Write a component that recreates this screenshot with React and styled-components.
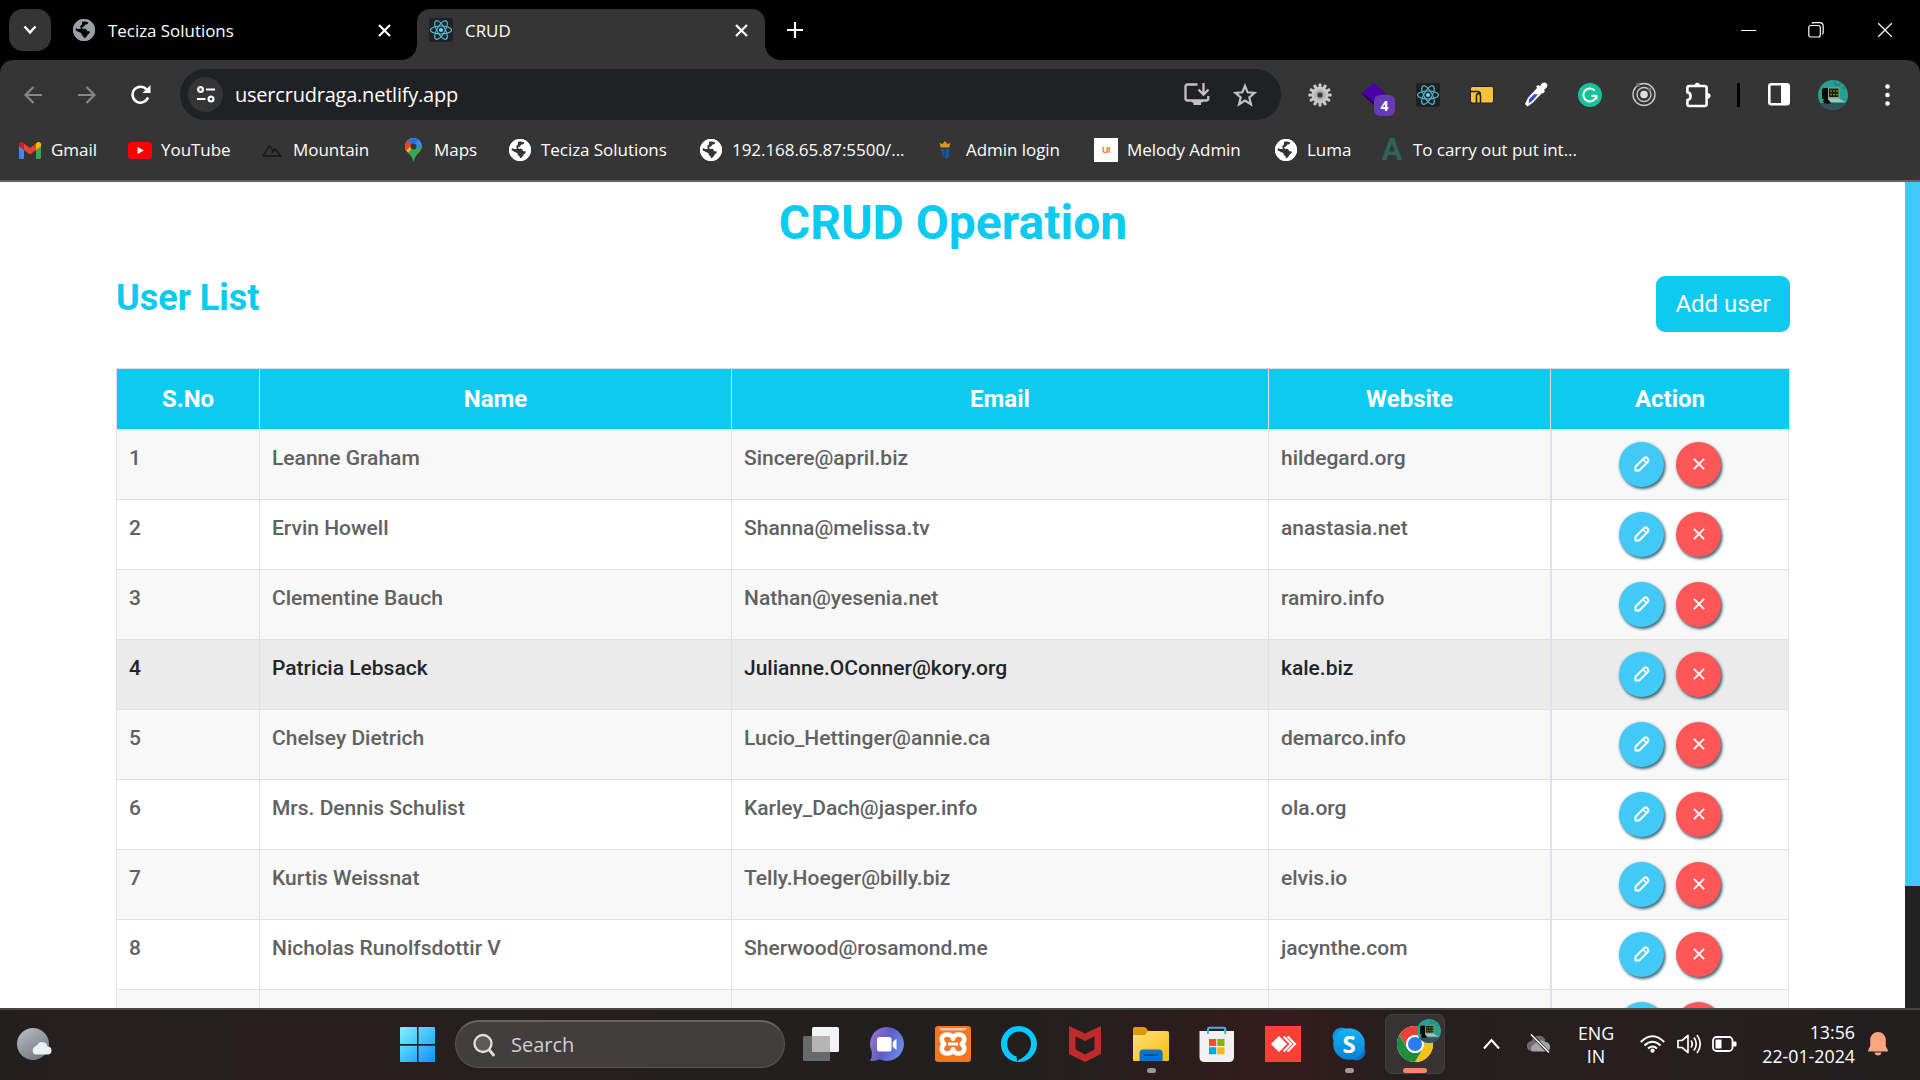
import React from "react";
import styled, { createGlobalStyle } from "styled-components";

const GlobalStyle = createGlobalStyle`
  *, *::before, *::after { box-sizing: border-box; }
  html, body { margin: 0; padding: 0; background: #000; overflow: hidden; }
  button { font: inherit; border: 0; padding: 0; background: none; color: inherit; }
  svg { display: block; flex: none; }
`;

const UI = `"Segoe UI", "Open Sans", "Noto Sans", sans-serif`;

const Screen = styled.div`
  width: 1920px;
  height: 1080px;
  display: flex;
  flex-direction: column;
  overflow: hidden;
  font-family: ${UI};
`;

/* ---------- browser chrome ---------- */
const TabStrip = styled.div`
  height: 60px;
  flex: none;
  display: flex;
  background: #000;
  padding: 9px 0 0 9px;
  color: #fff;
`;
const TabSearch = styled.button`
  width: 42px;
  height: 42px;
  border-radius: 14px;
  background: #353535;
  display: flex;
  align-items: center;
  justify-content: center;
  margin-right: 10px;
`;
const Tab = styled.div`
  position: relative;
  height: 51px;
  width: ${(p) => p.$width}px;
  padding: 0 ${(p) => (p.$active ? 17 : 26)}px 9px 12px;
  display: flex;
  align-items: center;
  font-size: 16.9px;
  letter-spacing: 0;
  white-space: nowrap;
  border-radius: 13px 13px 0 0;
  background: ${(p) => (p.$active ? "#353535" : "transparent")};
  &::before, &::after {
    content: "";
    display: ${(p) => (p.$active ? "block" : "none")};
    position: absolute;
    bottom: 0;
    width: 15px;
    height: 15px;
  }
  &::before { left: -15px; background: radial-gradient(circle at 0 0, transparent 14.5px, #353535 15px); }
  &::after { right: -15px; background: radial-gradient(circle at 100% 0, transparent 14.5px, #353535 15px); }
`;
const TabTitle = styled.span`
  flex: 1;
  margin-left: ${(p) => (p.$active ? 12 : 13)}px;
  padding-top: 1px;
`;
const NewTab = styled.button`
  width: 60px;
  height: 42px;
  display: grid;
  place-items: center;
`;
const WindowControls = styled.div`
  margin-left: auto;
  height: 42px;
  display: grid;
  grid-template-columns: 68px 68px 70px;
  place-items: center;
`;

const ChromePanel = styled.div`
  background: #000;
  flex: none;
`;
const ChromeInner = styled.div`
  height: 122px;
  background: #353535;
  border-radius: 13px 13px 0 0;
  border-bottom: 2px solid #656363;
`;
const Toolbar = styled.div`
  height: 69px;
  padding-top: 9px;
  display: flex;
  align-items: flex-start;
`;
const NavButtons = styled.div`
  width: 180px;
  height: 51px;
  padding-left: 6px;
  display: grid;
  grid-template-columns: repeat(3, 54px);
  place-items: center;
`;
const Omnibox = styled.div`
  width: 1101px;
  height: 51px;
  border-radius: 26px;
  background: #202124;
  display: flex;
  align-items: center;
  padding: 0 24px 0 8px;
  color: #fff;
`;
const SiteInfo = styled.span`
  width: 35px;
  height: 35px;
  border-radius: 50%;
  background: #353535;
  display: grid;
  place-items: center;
`;
const Url = styled.span`
  flex: 1;
  margin-left: 12px;
  font-size: 20px;
  letter-spacing: -0.22px;
`;
const OmniActions = styled.div`
  display: flex;
  gap: 23px;
  align-items: center;
`;
const Extensions = styled.div`
  height: 51px;
  margin-left: 12px;
  display: grid;
  grid-template-columns: repeat(8, 54px) 27px 54px 54px 54px;
  place-items: center;
`;
const Divider = styled.i`
  width: 3px;
  height: 24px;
  background: #000;
`;
const BadgeHost = styled.div`
  position: relative;
  width: 24px;
  height: 24px;
`;
const Badge = styled.span`
  position: absolute;
  left: 12px;
  top: 12px;
  width: 21px;
  height: 21px;
  border-radius: 6px;
  background: #673ab7;
  color: #fff;
  font-weight: 700;
  font-size: 14px;
  line-height: 22px;
  text-align: center;
`;
const Bookmarks = styled.div`
  height: 42px;
  padding-left: 18px;
  display: grid;
  grid-template-columns: 110px 132px 141px 107px 191px 234px 161px 180px 106px auto;
  align-items: center;
  justify-content: start;
  color: #fff;
  font-size: 17px;
`;
const Bookmark = styled.span`
  display: flex;
  align-items: center;
  gap: 9px;
  white-space: nowrap;
  letter-spacing: -0.05px;
`;
const BookmarkLabel = styled.span`
  padding-bottom: 2px;
`;
const Slot = styled.i`
  width: 24px;
  height: 24px;
  display: grid;
  place-items: center;
  font-style: normal;
`;
const UiTile = styled.i`
  width: 24px;
  height: 24px;
  background: #fff;
  color: #f4733c;
  font: 900 9px/24px "Liberation Sans", Arial, sans-serif;
  letter-spacing: -0.5px;
  text-align: center;
`;
const LetterA = styled.i`
  font: 700 31px/24px Roboto, sans-serif;
  color: #30635a;
`;

/* ---------- page ---------- */
const Viewport = styled.div`
  height: 826px;
  flex: none;
  display: flex;
  background: #fff;
  overflow: hidden;
  font-family: Roboto, sans-serif;
`;
const Page = styled.main`
  width: 1905px;
  height: 826px;
  overflow: hidden;
  padding: 11px 115px 0 116px;
`;
const Scrollbar = styled.div`
  width: 15px;
  background: #222;
`;
const Thumb = styled.div`
  height: 704px;
  background: #3fc8f8;
`;
const Heading = styled.h1`
  margin: 0 0 24px;
  font-size: 48px;
  line-height: 59px;
  font-weight: 700;
  color: #0dcaf0;
  text-align: center;
`;
const ListHeader = styled.div`
  display: flex;
  justify-content: space-between;
  align-items: flex-start;
  margin-bottom: 36px;
`;
const SubHeading = styled.h2`
  margin: 0;
  font-size: 36px;
  line-height: 45px;
  font-weight: 700;
  color: #0dcaf0;
`;
const AddButton = styled.button`
  width: 134px;
  height: 56px;
  border-radius: 9px;
  background: #0dcaf0;
  color: #fff;
  font-size: 24px;
`;
const HeadRow = styled.div`
  display: grid;
  grid-template-columns: 143px 472px 537px 282px 240px;
  height: 62px;
  background: #0dcaf0;
  border: solid #dee2e6;
  border-width: 1px 0;
`;
const HeadCell = styled.div`
  border-left: 1px solid #dee2e6;
  color: #fff;
  font-size: 24px;
  line-height: 60px;
  font-weight: 700;
  text-align: center;
  &:last-child { border-right: 1px solid #dee2e6; }
`;
const Row = styled.div`
  display: grid;
  grid-template-columns: 143px 472px 537px 282px 239px;
  width: 1673px;
  height: 70px;
  border-bottom: 1px solid #dee2e6;
  background: ${(p) => (p.$hover ? "#ebebeb" : p.$striped ? "#f8f8f8" : "#fff")};
  color: ${(p) => (p.$hover ? "#212529" : "#616161")};
`;
const Cell = styled.div`
  border-left: 1px solid #dee2e6;
  padding: 13px 11px 0 12px;
  font-size: 21px;
  line-height: 31px;
  font-weight: 500;
  white-space: nowrap;
`;
const ActionCell = styled.div`
  border-left: 2px solid #dee2e6;
  border-right: 1px solid #dee2e6;
  display: flex;
  justify-content: center;
  gap: 12px;
  padding: 12px 0 0 0;
`;
const Round = styled.button`
  width: 45px;
  height: 45px;
  border-radius: 50%;
  background: ${(p) => (p.$danger ? "#ff5757" : "#41c9f7")};
  box-shadow: 1.5px 2px 3px rgba(0, 60, 80, 0.75), 0 0 3px rgba(0, 0, 0, 0.18);
  display: grid;
  place-items: center;
  padding-bottom: 2px;
`;

/* ---------- taskbar ---------- */
const Taskbar = styled.footer`
  height: 72px;
  flex: none;
  display: flex;
  align-items: stretch;
  border-top: 2px solid #484545;
  color: #fff;
  background: linear-gradient(90deg, #241f1f 0, #291e1f 18%, #241f1f 35%, #241f1f 54%, #2d1d1d 62%, #351b1c 67%, #241f1f 73%, #281e1f 85%, #221f1f 100%);
`;
const Weather = styled.div`
  width: 384px;
  padding-left: 17px;
  display: flex;
  align-items: center;
`;
const Start = styled.div`
  width: 71px;
  display: flex;
  align-items: center;
  padding-left: 16px;
  padding-bottom: 1px;
`;
const SearchBox = styled.div`
  width: 330px;
  height: 48px;
  margin-top: 10px;
  border-radius: 24px;
  background: #433e3e;
  border: 1px solid #5b5656;
  border-top: 2px solid #696363;
  display: flex;
  align-items: center;
  gap: 15px;
  padding-left: 16px;
  color: #d2cfcf;
  font-size: 20px;
`;
const Apps = styled.div`
  display: grid;
  grid-template-columns: repeat(10, 66px);
  margin-left: 3px;
`;
const TaskbarApp = styled.div`
  position: relative;
  display: grid;
  place-items: center;
  padding-bottom: 2px;
`;
const ActiveTile = styled.div`
  width: 60px;
  height: 60px;
  border-radius: 7px;
  background: #393434;
  border: 1px solid #443f3f;
  display: grid;
  place-items: center;
`;
const Indicator = styled.i`
  position: absolute;
  left: calc(50% - ${(p) => p.$w / 2}px);
  bottom: 7px;
  width: ${(p) => p.$w}px;
  height: 5px;
  border-radius: 3px;
  background: ${(p) => p.$c};
`;
const Tray = styled.div`
  flex: 1;
  display: flex;
  align-items: center;
  padding-left: 19px;
`;
const TrayIcon = styled.div`
  width: ${(p) => p.$w}px;
  flex: none;
  display: grid;
  place-items: center;
  padding-bottom: 2px;
`;
const Lang = styled.div`
  width: 66px;
  flex: none;
  text-align: center;
  font-size: 17.8px;
  line-height: 23px;
  padding-bottom: 1px;
`;
const Clock = styled.div`
  width: 109px;
  flex: none;
  text-align: right;
  font-size: 17.8px;
  line-height: 24px;
  padding-bottom: 3px;
  letter-spacing: 0;
  white-space: nowrap;
`;

/* ---------- icons ---------- */
const Globe = ({ color, bg }) => (
  <svg width="22" height="22" viewBox="0 0 22 22">
    <circle cx="11" cy="11" r="11" fill={color} />
    <path d="M9 2.6 C12 1.8 14.5 2.3 15.6 3.2 C15.4 4.8 13.8 5.6 12 5.7 C11.6 7.2 10.8 7.9 9.3 8 C8.9 9 9.4 9.7 10.5 9.9 C12.4 9.7 13.7 10.3 13.9 11.8 C14.8 12.6 15.8 12.2 16.7 12.6 C16.9 14.4 15.7 15.2 14.6 15.6 C14.2 17.3 13 18.9 11 19.3 L10.4 17 C8.7 16.6 8.4 15.4 8.6 14.2 C6.5 13.8 5 12.2 2.6 11.6 C2.4 10.6 2.5 9.8 2.8 8.9 C4.2 10 6.3 10.4 8 9.7 C6.8 8.2 7.2 6.6 9 5.6 Z" fill={bg} />
    <circle cx="11" cy="11" r="9.8" fill="none" stroke={color} strokeWidth="2.2" />
  </svg>
);
const Close = ({ size = 13, w = 2.2 }) => (
  <svg width={size} height={size} viewBox="0 0 13 13" stroke="#fff" strokeWidth={w} fill="none">
    <path d="M1 1 12 12 M12 1 1 12" />
  </svg>
);
const ReactLogo = ({ tile }) => (
  <svg width="24" height="24" viewBox="0 0 24 24">
    <rect width="24" height="24" rx="2" fill={tile} />
    <g fill="none" stroke="#53c1de" strokeWidth="1.1">
      <ellipse cx="12" cy="12" rx="10.5" ry="4" />
      <ellipse cx="12" cy="12" rx="10.5" ry="4" transform="rotate(60 12 12)" />
      <ellipse cx="12" cy="12" rx="10.5" ry="4" transform="rotate(120 12 12)" />
    </g>
    <circle cx="12" cy="12" r="2.1" fill="#61dafb" />
  </svg>
);
const Gmail = () => (
  <svg width="22" height="17" viewBox="0 0 22 17">
    <path d="M0 2.5V15.5Q0 17 1.5 17H5V7L0 3Z" fill="#4285f4" />
    <path d="M22 2.5V15.5Q22 17 20.5 17H17V7L22 3Z" fill="#34a853" />
    <path d="M17 1.5V8L22 4.3V2.3C22 .2 19.7-.6 18.2.5Z" fill="#fbbc04" />
    <path d="M5 8V1.5L11 6 17 1.5V8L11 12.4Z" fill="#ea4335" />
    <path d="M0 2.3V4.3L5 8V1.5L3.8.5C2.2-.6 0 .3 0 2.3Z" fill="#c5221f" />
  </svg>
);
const YouTube = () => (
  <svg width="24" height="17" viewBox="0 0 24 17">
    <rect width="24" height="17" rx="4" fill="#f00" />
    <path d="M9.6 4.9v7.2L15.8 8.5Z" fill="#fff" />
  </svg>
);
const Mountain = () => (
  <svg width="20" height="13" viewBox="0 0 20 13" fill="none" stroke="#151515" strokeWidth="1.3" strokeLinejoin="round">
    <path d="M1 12 7.5 1.5 11 7 13 5 18.8 12Z M9.5 9.5 11.2 7" />
  </svg>
);
const MapsPin = () => (
  <svg width="17" height="24" viewBox="0 0 17 24">
    <defs>
      <clipPath id="pin"><path d="M8.5 0A8.4 8.4 0 0 1 17 8.4C17 14 10.3 15.5 8.5 24 6.7 15.5 0 14 0 8.4A8.4 8.4 0 0 1 8.5 0Z" /></clipPath>
    </defs>
    <g clipPath="url(#pin)">
      <rect width="17" height="24" fill="#34a853" />
      <path d="M0 16 17-2 0-2Z" fill="#fbbc04" />
      <path d="M0 18 12 5 4 5 0 10Z" fill="#fbbc04" />
      <path d="M0-1H17V3L8.5 8 2 3.5Z" fill="#1a73e8" />
      <path d="M8 8 14 1 17 5V8L8.5 12Z" fill="#4285f4" />
      <path d="M-1 2H2L7 6.5 0 14Z" fill="#ea4335" />
    </g>
    <circle cx="8.5" cy="8.4" r="3" fill="#353535" />
  </svg>
);
const Crown = () => (
  <svg width="12" height="18" viewBox="0 0 12 18">
    <path d="M.5 2 3.500 3 6 0 8.500 3 11.500 2 10.200 6.500H1.800Z" fill="#d9951f" />
    <path d="M2 8h3.500v8.500C4 16 3.300 14.500 3.300 13V10H2ZM6.600 8h3.600v5.500C10.200 16 9 17.500 6.200 18Z" fill="#0c5cab" />
  </svg>
);
const Gear = () => (
  <svg width="24" height="26" viewBox="-12 -13 24 26">
    <g fill="#c9c9c9">
      {Array.from({ length: 12 }, (_, i) => (
        <rect key={i} x="-1.5" y="-11.6" width="3" height="5" rx=".7" transform={`rotate(${i * 30})`} />
      ))}
      <circle r="8.2" fill="#c9c9c9" />
    </g>
    <circle r="3" fill="#353535" stroke="#8a8a8a" strokeWidth="1.3" />
    <circle r="5.2" fill="none" stroke="#a8a8a8" strokeWidth=".9" />
  </svg>
);
const Dropper = () => (
  <svg width="24" height="25" viewBox="0 0 24 25">
    <path d="M4.2 15.5 13.5 5.5 18.5 10.5 9 20.5 3.5 24.5 1 22Z" fill="#fff" />
    <path d="M5.2 17.2 10 12.2H14L8.2 19 4.6 21.5Z" fill="#2d4fc5" />
    <path d="M12 4.5 14.4 2.9 16 4.4C17 1.4 20 -.5 22.4 1.2 24.6 3 23 6.4 20 7.7L21 9.3 18.7 11.8Z" fill="#fff" />
  </svg>
);
const Grammarly = () => (
  <svg width="24" height="24" viewBox="0 0 24 24">
    <circle cx="12" cy="12" r="12" fill="#15c39a" />
    <path d="M16.8 7.7A6.5 6.5 0 1 0 18.3 12.8H13.4M18.4 12.8V16.6" fill="none" stroke="#fff" strokeWidth="2" />
  </svg>
);
const Target = () => (
  <svg width="24" height="25" viewBox="0 0 24 25" fill="none" stroke="#c9c9c9" strokeWidth="1.4">
    <circle cx="12" cy="12.5" r="11" />
    <circle cx="12" cy="12.5" r="7" />
    <circle cx="12" cy="12.5" r="3.8" fill="#dedede" stroke="none" />
    <circle cx="6" cy="3" r="2" fill="#777" stroke="none" />
    <circle cx="17.5" cy="7.5" r="2" fill="#777" stroke="none" />
  </svg>
);
const Puzzle = () => (
  <svg width="25" height="26" viewBox="0 0 25 26">
    <path d="M3.2 4H18.4Q20.6 4 20.6 6V22Q20.600 24 18.6 24H3.2Q1.4 24 1.4 22V18C5.6 17.6 5.6 10.8 1.4 10.4V6Q1.4 4 3.2 4Z" fill="none" stroke="#fff" strokeWidth="2.6" strokeLinejoin="round" />
    <path d="M8.500 4A2.800 2.800 0 1 1 14 4ZM21 11A2.900 2.900 0 1 1 21 16.600Z" fill="#fff" />
  </svg>
);
const Avatar = ({ size }) => (
  <svg width={size} height={size} viewBox="0 0 30 30">
    <defs><clipPath id={`av${size}`}><circle cx="15" cy="15" r="15" /></clipPath></defs>
    <g clipPath={`url(#av${size})`}>
      <rect width="30" height="30" fill="#27a08f" />
      <path d="M17 0v5h5v-5M24 8h6M3 10h5" stroke="#177c70" fill="none" />
      <rect y="23" width="30" height="7" fill="#36505c" />
      <path d="M5 8H10V23H6V19H4V10Z" fill="#08090b" />
      <rect x="10" y="7.500" width="11.500" height="11" rx="1.200" fill="#95a3a3" />
      <rect x="11" y="8.500" width="9.500" height="8.500" fill="#142005" />
      <path d="M12 11h2m1 0h2m1 0h2M12 14.500h2m1 0h2m1 0h2" stroke="#6d8b12" strokeWidth="1.5" />
      <path d="M10 18.500H21L27 22H11Z" fill="#b2bdbf" />
      <path d="M5 20H11L13 23.500H6Z" fill="#07080a" />
    </g>
  </svg>
);
const Pencil = () => (
  <svg width="16" height="16" viewBox="0 0 16 16" fill="none" stroke="#fff" strokeWidth="2" strokeLinejoin="round">
    <path d="M1.500 14.500V10.700L10.200 2Q11.700.6 13.300 2.200 15.200 4.200 13.900 5.700L5.300 14.500Z" />
    <path d="M9.200 3.600 12.400 6.800" strokeWidth="1.500" />
  </svg>
);
const WinLogo = () => (
  <svg width="36" height="36" viewBox="0 0 36 36">
    <defs><linearGradient id="win" x1="0" y1="0" x2="1" y2="1"><stop offset="0" stopColor="#7cf3ff" /><stop offset="1" stopColor="#0a94fb" /></linearGradient></defs>
    <path d="M1 0H17V17H0V1Q0 0 1 0ZM18.5 0H34Q35 0 35 1V17H18.5ZM0 18.7H17V35H1Q0 35 0 34ZM18.5 18.7H35V34Q35 35 34 35H18.5Z" fill="url(#win)" />
  </svg>
);
const Moon = () => (
  <svg width="36" height="34" viewBox="0 0 36 34">
    <defs><linearGradient id="mn" x1="0" y1="0" x2=".6" y2="1"><stop offset="0" stopColor="#b9c0c8" /><stop offset="1" stopColor="#747b84" /></linearGradient></defs>
    <circle cx="16" cy="16" r="16" fill="url(#mn)" />
    <path d="M18 26.5A4.5 4.5 0 0 1 18 18.5Q19 17.5 20 17.5A5.5 5.5 0 0 1 30.5 18.5 4 4 0 0 1 30.5 26.5Z" fill="#eceff3" />
  </svg>
);
const SearchIcon = () => (
  <svg width="24" height="24" viewBox="0 0 24 24" fill="none" stroke="#e2e0e0" strokeWidth="2.3" strokeLinecap="round">
    <circle cx="11" cy="10.5" r="8.5" fill="#5e5959" /><path d="M17.3 17 21.5 22" strokeWidth="2.8" />
  </svg>
);
const TaskView = () => (
  <svg width="36" height="34" viewBox="0 0 36 34">
    <rect y="9" width="27" height="25" rx="1.5" fill="#696969" />
    <rect x="9" width="27" height="25" rx="1.5" fill="#f3f3f3" />
    <path d="M9 9H27V25H9Z" fill="#b5b5b5" />
  </svg>
);
const Chat = () => (
  <svg width="34" height="35" viewBox="0 0 34 35">
    <defs><linearGradient id="ch" x1="0" y1=".2" x2="1" y2=".6"><stop offset="0" stopColor="#9a74c8" /><stop offset=".5" stopColor="#5f5dc6" /><stop offset="1" stopColor="#6a8be8" /></linearGradient></defs>
    <path d="M17 0A17 17 0 1 1 9.5 32.3Q5 34.5.6 34 0 34 .4 33 2.4 30 1.7 24.5A17 17 0 0 1 17 0Z" fill="url(#ch)" />
    <rect x="7" y="10" width="14.5" height="14.5" rx="2.5" fill="#fff" />
    <path d="M22.7 15 26.5 11.8V23L22.7 19.8Z" fill="#fff" />
  </svg>
);
const Xampp = () => (
  <svg width="36" height="36" viewBox="0 0 36 36">
    <rect width="36" height="36" rx="3" fill="#f37623" />
    <path d="M4 2H32Q31 4.5 28 4.5H8Q5 4.5 4 2Z" fill="#fac39b" />
    <g fill="none" stroke="#fff" strokeWidth="4.6" strokeLinejoin="round">
      <path d="M18 12.8C17.4 7.6 8 7 6.9 12 6 16 9 17.5 9.2 18 9 18.4 6 20.4 6.9 24 8 29 17.4 28.4 18 23.2 18.6 28.4 28 29 29.1 24 30 20.4 27 18.4 26.8 18 27 17.5 30 16 29.1 12 28 7 18.6 7.6 18 12.8Z" />
      <path d="M13 18H23" strokeWidth="4" />
    </g>
    <path d="M11.5 12.5h3v2.5h7v-2.5h3v3l-2 1h-9l-2-1ZM11.5 23.5h3V21h7v2.5h3v-3l-2-1h-9l-2 1Z" fill="#f37623" />
  </svg>
);
const Alexa = () => (
  <svg width="36" height="36" viewBox="0 0 36 36">
    <path fillRule="evenodd" d="M18 0A18 18 0 1 1 16 35.9L15.6 30.6C8 28 6.2 22 6.2 17.5A11.9 12 0 0 1 30 17.5C30 26 23 31.5 18.6 33.4Q16.5 34.2 16 35.9A18 18 0 0 1 18 0Z" fill="#00caff" />
  </svg>
);
const McAfee = () => (
  <svg width="32" height="36" viewBox="0 0 32 36">
    <path fillRule="evenodd" d="M0 0 16 7.5 32 0V28L16 36 0 28ZM6.5 10.2V23.5L16 28.5 25.5 23.5V10.2L16 15Z" fill="#c02a2b" />
  </svg>
);
const Folder = () => (
  <svg width="36" height="34" viewBox="0 0 36 34">
    <defs><linearGradient id="fo" x1="0" y1="0" x2="1" y2="1"><stop offset="0" stopColor="#ffe27a" /><stop offset="1" stopColor="#f8bb12" /></linearGradient></defs>
    <path d="M0 2Q0 0 2 0H11Q12.5 0 13.5 1.5L16 5V12H0Z" fill="#dc9b05" />
    <path d="M0 8H12L15 4H34Q36 4 36 6V33Q36 34 34.5 34H1.5Q0 34 0 33Z" fill="url(#fo)" />
    <path d="M6.5 34V26Q6.5 22.5 10 22.5H26Q29.7 22.5 29.7 26V34Z" fill="#0b73c8" />
    <path d="M11 28H25" stroke="#084a8c" strokeWidth="2" />
  </svg>
);
const Store = () => (
  <svg width="36" height="36" viewBox="0 0 36 36">
    <path d="M9 8V3Q9 1.8 10.2 1.8H25Q26.2 1.8 26.2 3V8" fill="none" stroke="#3db3ee" strokeWidth="2" />
    <path d="M.5 5H35V31Q35 36 30 36H5.500Q.5 36 .5 31Z" fill="#f1f1f1" />
    <path d="M9 8V3M26.2 3V8" stroke="#3db3ee" strokeWidth="2" />
    <path d="M10 13h7.200v7H10Z" fill="#f25022" /><path d="M18.300 13h7.200v7h-7.200Z" fill="#7fba00" />
    <path d="M10 21.200h7.200v7H10Z" fill="#00a4ef" /><path d="M18.300 21.200h7.200v7h-7.200Z" fill="#ffb900" />
  </svg>
);
const AnyDesk = () => (
  <svg width="36" height="36" viewBox="0 0 36 36">
    <rect width="36" height="36" fill="#fb4037" />
    <path d="M6 18 14 10 22 18 14 26Z" fill="#fff" />
    <path d="M18.500 10.500 26 18 18.500 25.500M22.500 10.500 30 18 22.500 25.500" fill="none" stroke="#fff" strokeWidth="2" />
  </svg>
);
const SkypeMark = styled.div`
  position: relative;
  width: 34px;
  height: 34px;
`;
const SkypeLetter = styled.b`
  position: absolute;
  inset: 0;
  text-align: center;
  font: 700 24px/33px "Open Sans", sans-serif;
  color: #fff;
`;
const Skype = () => (
  <SkypeMark>
    <svg width="34" height="34" viewBox="0 0 34 34">
      <defs><linearGradient id="sk" x1="0" y1="0" x2="0" y2="1"><stop offset="0" stopColor="#15b5f0" /><stop offset="1" stopColor="#0a7fd6" /></linearGradient></defs>
      <circle cx="9.500" cy="9.500" r="9" fill="#1593d8" /><circle cx="24.500" cy="24.500" r="9" fill="#0a70c8" />
      <circle cx="17" cy="17" r="15.800" fill="url(#sk)" />
    </svg>
    <SkypeLetter>S</SkypeLetter>
  </SkypeMark>
);
const ChromeHost = styled.div`
  position: relative;
  width: 36px;
  height: 36px;
`;
const ProfilePin = styled.div`
  position: absolute;
  left: 20px;
  top: -7px;
`;
const ChromeLogo = () => (
  <ChromeHost>
    <svg width="36" height="36" viewBox="0 0 36 36">
      <circle cx="18" cy="18" r="18" fill="#fff" />
      <path d="M2.410 9A18 18 0 0 1 33.590 9H18A9 9 0 0 0 10.200 22.500Z" fill="#ea4335" />
      <path d="M33.590 9A18 18 0 0 1 18 36L25.800 22.500A9 9 0 0 0 18 9Z" fill="#fbc116" />
      <path d="M18 36A18 18 0 0 1 2.410 9L10.200 22.500A9 9 0 0 0 25.800 22.500Z" fill="#1e8e3e" />
      <circle cx="18" cy="18" r="8.800" fill="#fff" /><circle cx="18" cy="18" r="7" fill="#2f7ded" />
    </svg>
    <ProfilePin><Avatar size={24} /></ProfilePin>
  </ChromeHost>
);

/* ---------- data ---------- */
const users = [
  ["1", "Leanne Graham", "Sincere@april.biz", "hildegard.org"],
  ["2", "Ervin Howell", "Shanna@melissa.tv", "anastasia.net"],
  ["3", "Clementine Bauch", "Nathan@yesenia.net", "ramiro.info"],
  ["4", "Patricia Lebsack", "Julianne.OConner@kory.org", "kale.biz"],
  ["5", "Chelsey Dietrich", "Lucio_Hettinger@annie.ca", "demarco.info"],
  ["6", "Mrs. Dennis Schulist", "Karley_Dach@jasper.info", "ola.org"],
  ["7", "Kurtis Weissnat", "Telly.Hoeger@billy.biz", "elvis.io"],
  ["8", "Nicholas Runolfsdottir V", "Sherwood@rosamond.me", "jacynthe.com"],
  ["", "", "", ""],
];
const whiteGlobe = <Globe color="#fff" bg="#353535" />;
const bookmarks = [
  ["Gmail", <Gmail />],
  ["YouTube", <YouTube />],
  ["Mountain", <Mountain />],
  ["Maps", <MapsPin />],
  ["Teciza Solutions", whiteGlobe],
  ["192.168.65.87:5500/...", whiteGlobe],
  ["Admin login", <Crown />],
  ["Melody Admin", <UiTile>UI</UiTile>],
  ["Luma", whiteGlobe],
  ["To carry out put int...", <LetterA>A</LetterA>],
];

export default function App() {
  return (
    <Screen>
      <GlobalStyle />
      <TabStrip>
        <TabSearch>
          <svg width="14" height="10" viewBox="0 0 14 10" fill="none" stroke="#fff" strokeWidth="2.400"><path d="M1.500 1.500 7 7.500 12.500 1.500" /></svg>
        </TabSearch>
        <Tab $width={356}>
          <Globe color="#9aa0a6" bg="#000" />
          <TabTitle>Teciza Solutions</TabTitle>
          <Close />
        </Tab>
        <Tab $active $width={348}>
          <ReactLogo tile="#222" />
          <TabTitle $active>CRUD</TabTitle>
          <Close />
        </Tab>
        <NewTab>
          <svg width="16" height="16" viewBox="0 0 16 16" stroke="#fff" strokeWidth="2.200"><path d="M8 0V16M0 8H16" /></svg>
        </NewTab>
        <WindowControls>
          <svg width="15" height="15" viewBox="0 0 15 15" stroke="#fff" strokeWidth="1"><path d="M0 7.500H15" /></svg>
          <svg width="16" height="16" viewBox="0 0 16 16" fill="none" stroke="#fff" strokeWidth="1.200"><rect x=".8" y="3.500" width="11.500" height="11.500" rx="2" /><path d="M3.800 1.500Q4.400.7 6 .7H11.500Q15.200.7 15.200 4.400V10Q15.200 11.600 14.200 12.200" /></svg>
          <Close size={16} w={1} />
        </WindowControls>
      </TabStrip>

      <ChromePanel>
        <ChromeInner>
          <Toolbar>
            <NavButtons>
              <svg width="18" height="18" viewBox="0 0 18 18" fill="none" stroke="#878787" strokeWidth="2.200"><path d="M18 9H2M9.500 1 1.500 9 9.500 17" /></svg>
              <svg width="18" height="18" viewBox="0 0 18 18" fill="none" stroke="#878787" strokeWidth="2.200"><path d="M0 9H16M8.500 1 16.500 9 8.500 17" /></svg>
              <svg width="20" height="20" viewBox="0 0 20 20"><path d="M17 12.500A8 8 0 1 1 15.500 4.300L17 6" fill="none" stroke="#fff" strokeWidth="2.500" /><path d="M19.500 0V8H11.500Z" fill="#fff" /></svg>
            </NavButtons>
            <Omnibox>
              <SiteInfo>
                <svg width="18" height="17" viewBox="0 0 18 17" fill="none" stroke="#fff" strokeWidth="2.200"><circle cx="3.500" cy="3.500" r="2.400" /><path d="M9 3.500H18M0 13H8.500" /><circle cx="14" cy="13" r="2.400" /></svg>
              </SiteInfo>
              <Url>usercrudraga.netlify.app</Url>
              <OmniActions>
                <svg width="26" height="23" viewBox="0 0 26 23" fill="none" stroke="#c2c2c2" strokeWidth="2.300"><path d="M13.500 1.500H3.500Q1.500 1.500 1.500 3.500V15.500Q1.500 17.500 3.500 17.500H22Q24.300 17.500 24.300 15.500V13" /><path d="M19.500 0V11M14.500 6.500 19.500 11.500 24.500 6.500" /><path d="M8 17.500H18.500V19.500H17V22H9.500V19.500H8Z" fill="#c2c2c2" stroke="none" /></svg>
                <svg width="24" height="24" viewBox="0 0 24 24" fill="none" stroke="#c2c2c2" strokeWidth="2.200"><path d="M12 2.800 14.600 9.300 21.600 9.900 16.300 14.500 18 21.300 12 17.600 6 21.300 7.700 14.500 2.400 9.900 9.400 9.300Z" /></svg>
              </OmniActions>
            </Omnibox>
            <Extensions>
              <Gear />
              <BadgeHost>
                <svg width="24" height="24" viewBox="0 0 24 24"><path d="M0 11 12 22 12 14 4 8Z" fill="#21005e" /><path d="M0 9.500 11.500 0 23.500 9.500 11.500 19Z" fill="#4a00a8" /></svg>
                <Badge>4</Badge>
              </BadgeHost>
              <ReactLogo tile="#1f2022" />
              <svg width="24" height="18" viewBox="0 0 24 18"><rect x=".5" y=".5" width="23" height="16.500" rx="2" fill="#f5c23e" stroke="#222" /><path d="M1 5.500H7.500Q10 5.500 10.500 8M6.500 17V10Q6.500 7.500 8.500 7.500 10.500 7.500 10.500 10V17" fill="none" stroke="#222" strokeWidth="1.600" /></svg>
              <Dropper />
              <Grammarly />
              <Target />
              <Puzzle />
              <Divider />
              <svg width="22" height="23" viewBox="0 0 22 23"><rect x="1.300" y="1.300" width="19.400" height="20" rx="2" fill="none" stroke="#fff" strokeWidth="2.600" /><path d="M13 1H20V21.500H13Z" fill="#fff" /></svg>
              <Avatar size={30} />
              <svg width="5" height="22" viewBox="0 0 5 22" fill="#fff"><circle cx="2.500" cy="2.500" r="2.300" /><circle cx="2.500" cy="11" r="2.300" /><circle cx="2.500" cy="19.500" r="2.300" /></svg>
            </Extensions>
          </Toolbar>
          <Bookmarks>
            {bookmarks.map(([label, icon]) => (
              <Bookmark key={label}><Slot>{icon}</Slot><BookmarkLabel>{label}</BookmarkLabel></Bookmark>
            ))}
          </Bookmarks>
        </ChromeInner>
      </ChromePanel>

      <Viewport>
        <Page>
          <Heading>CRUD Operation</Heading>
          <ListHeader>
            <SubHeading>User List</SubHeading>
            <AddButton>Add user</AddButton>
          </ListHeader>
          <HeadRow>
            {["S.No", "Name", "Email", "Website", "Action"].map((h) => <HeadCell key={h}>{h}</HeadCell>)}
          </HeadRow>
          {users.map((u, i) => (
            <Row key={i} $striped={i % 2 === 0} $hover={i === 3}>
              {u.map((value, j) => <Cell key={j}>{value}</Cell>)}
              <ActionCell>
                <Round><Pencil /></Round>
                <Round $danger><Close size={12} w={2.100} /></Round>
              </ActionCell>
            </Row>
          ))}
        </Page>
        <Scrollbar><Thumb /></Scrollbar>
      </Viewport>

      <Taskbar>
        <Weather><Moon /></Weather>
        <Start><WinLogo /></Start>
        <SearchBox><SearchIcon />Search</SearchBox>
        <Apps>
          <TaskbarApp><TaskView /></TaskbarApp>
          <TaskbarApp><Chat /></TaskbarApp>
          <TaskbarApp><Xampp /></TaskbarApp>
          <TaskbarApp><Alexa /></TaskbarApp>
          <TaskbarApp><McAfee /></TaskbarApp>
          <TaskbarApp><Folder /><Indicator $w={9} $c="#9c9999" /></TaskbarApp>
          <TaskbarApp><Store /></TaskbarApp>
          <TaskbarApp><AnyDesk /></TaskbarApp>
          <TaskbarApp><Skype /><Indicator $w={9} $c="#9c9999" /></TaskbarApp>
          <TaskbarApp><ActiveTile><ChromeLogo /></ActiveTile><Indicator $w={24} $c="#f4866b" /></TaskbarApp>
        </Apps>
        <Tray>
          <TrayIcon $w={48}><svg width="17" height="12" viewBox="0 0 17 12" fill="none" stroke="#fff" strokeWidth="2"><path d="M1 10.500 8.500 2 16 10.500" /></svg></TrayIcon>
          <TrayIcon $w={48}><svg width="25" height="20" viewBox="0 0 25 20"><path d="M5 17A5 5 0 0 1 4.500 7 7.500 7.500 0 0 1 18.500 6Z" fill="#6f6c6c" /><path d="M5 17.500A4.500 4.500 0 0 1 6 11Q13 4 19 8A5 5 0 0 1 20 17.500Z" fill="#a5a3a3" /><path d="M4 0 22 19" stroke="#241f1f" strokeWidth="3" /><path d="M4 .5 22 18.500" stroke="#fff" strokeWidth="1.500" /></svg></TrayIcon>
          <Lang>ENG<br />IN</Lang>
          <TrayIcon $w={46}><svg width="25" height="18" viewBox="0 0 25 18" fill="none" stroke="#fff" strokeWidth="2"><path d="M.8 7Q12.500-4.500 24.200 7M4.500 10.500Q12.500 3 20.500 10.500M8 13.500Q12.500 9.500 17 13.500" /><circle cx="12.500" cy="15.700" r="2.100" fill="#fff" stroke="none" /></svg></TrayIcon>
          <TrayIcon $w={28}><svg width="25" height="20" viewBox="0 0 25 20" fill="none" stroke="#fff" strokeWidth="1.700" strokeLinejoin="round"><path d="M1 6.500H5L11 1.500V18.500L5 13.500H1ZM14 6.500Q16.500 10 14 13.500M17 3.500Q21.500 10 17 16.500M20 1Q26.500 10 20 19" /></svg></TrayIcon>
          <TrayIcon $w={43}><svg width="25" height="16" viewBox="0 0 25 16"><rect x="1" y="1" width="19.500" height="14" rx="3.500" fill="none" stroke="#fff" strokeWidth="1.800" /><rect x="3.500" y="3.500" width="6" height="9" rx="1" fill="#fff" /><path d="M21 5.500h2.500q1 0 1 1v3q0 1-1 1H21Z" fill="#fff" /></svg></TrayIcon>
          <Clock>13:56<br />22-01-2024</Clock>
          <TrayIcon $w={46}><svg width="20" height="24" viewBox="0 0 20 24" fill="#fba481"><path d="M10 0A7.800 7.800 0 0 1 17.800 7.800V14L19.800 18V19.500H.2V18L2.200 14V7.800A7.800 7.800 0 0 1 10 0ZM6.500 20.500H13.500Q13 23.500 10 23.500 7 23.500 6.500 20.500Z" /></svg></TrayIcon>
        </Tray>
      </Taskbar>
    </Screen>
  );
}
